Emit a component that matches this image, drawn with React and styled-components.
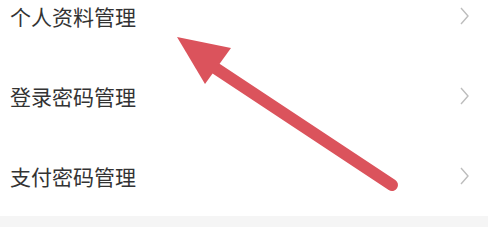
import React from 'react';
import styled, { createGlobalStyle } from 'styled-components';

const GlobalStyle = createGlobalStyle`
    html, body {
        margin: 0;
        padding: 0;
        background: #ffffff;
    }
    body {
        width: 488px;
        height: 227px;
        overflow: hidden;
    }
`;

const items = ['个人资料管理', '登录密码管理', '支付密码管理'];

export default function App() {
    return (
        <PageStyle>
            <GlobalStyle />
            <ListStyle>
                {items.map((label) => (
                    <RowStyle key={label}>
                        <LabelStyle>{label}</LabelStyle>
                        <Chevron />
                    </RowStyle>
                ))}
            </ListStyle>
            <FooterGap />
            <ArrowOverlay viewBox="0 0 488 227">
                <line x1="392" y1="185" x2="200" y2="58" stroke="#db535c" strokeWidth="12" strokeLinecap="round" />
                <polygon points="177,37 231,48 205,84" fill="#db535c" />
            </ArrowOverlay>
        </PageStyle>
    );
}

function Chevron() {
    return (
        <ChevronSvg viewBox="0 0 9 18">
            <polyline points="1,1 8,9 1,17" fill="none" stroke="#bdbdbd" strokeWidth="1.4" />
        </ChevronSvg>
    );
}

const PageStyle = styled.div`
    position: relative;
    width: 488px;
    height: 227px;
    overflow: hidden;
    display: flex;
    flex-direction: column;
    background: #ffffff;
    font-family: "Noto Sans CJK SC", "Noto Sans", sans-serif;
`;

const ListStyle = styled.div`
    display: flex;
    flex-direction: column;
    margin-top: -24px;
`;

const RowStyle = styled.div`
    display: flex;
    align-items: center;
    justify-content: space-between;
    height: 80px;
    padding: 0 19px 0 10px;
    background: #ffffff;
`;

const LabelStyle = styled.span`
    font-size: 21px;
    line-height: 1;
    color: #333333;
`;

const ChevronSvg = styled.svg`
    width: 9px;
    height: 18px;
`;

const FooterGap = styled.div`
    flex: 1;
    background: #f5f5f5;
`;

const ArrowOverlay = styled.svg`
    position: absolute;
    left: 0;
    top: 0;
    width: 488px;
    height: 227px;
    pointer-events: none;
`;
